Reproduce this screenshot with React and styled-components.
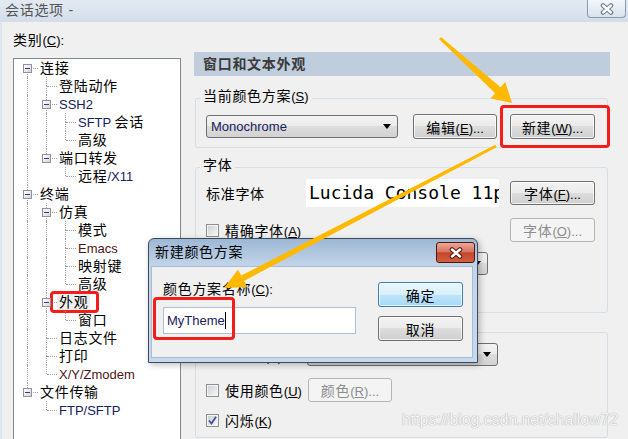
import styled, { createGlobalStyle, css } from "styled-components";

const ORANGE = "#ffb900";
const NAVY = "#17215c";
const MAROON = "#4d1616";

const GlobalStyle = createGlobalStyle`
  *, *::before, *::after { box-sizing: border-box; }
  html, body { margin: 0; padding: 0; }
  body {
    width: 628px;
    height: 439px;
    overflow: hidden;
    background: #f0f0f0;
    font-family: "Liberation Sans", "Noto Sans CJK SC", sans-serif;
    font-size: 14px;
    color: #000;
  }
`;

const redMark = (t, l, w, h) => css`
  &::after {
    content: "";
    position: absolute;
    top: ${t}px;
    left: ${l}px;
    width: ${w}px;
    height: ${h}px;
    border: 3px solid #f51c1c;
    border-radius: 4px;
    pointer-events: none;
  }
`;

const Window = styled.div`
  position: relative;
  width: 628px;
  height: 439px;
  overflow: hidden;
  display: flex;
  flex-direction: column;
  background: #f0f0f0;
  letter-spacing: 0.7px;
`;

const TitleBar = styled.div`
  height: 22px;
  flex: none;
  display: flex;
  align-items: flex-start;
  justify-content: space-between;
  padding-left: 5px;
  background: linear-gradient(#e3eaf3, #d3deeb);
`;

const Title = styled.span`
  line-height: 21px;
  color: #555;
`;

const CaptionButton = styled.div`
  width: 39px;
  height: ${(p) => p.$h}px;
  flex: none;
  display: flex;
  align-items: center;
  justify-content: center;
  ${(p) =>
    p.$danger
      ? css`
          border: 1px solid #4a1a12;
          border-radius: 3px;
          background: linear-gradient(#eaa999 0%, #d87560 45%, #c4452b 52%, #d0603f 100%);
        `
      : css`
          margin-right: 2px;
          border: 1px solid #8a9ab0;
          border-top: none;
          border-radius: 0 0 4px 4px;
          background: linear-gradient(#f4f7fb, #d9e2ed);
        `}
`;

const Body = styled.div`
  flex: 1;
  min-height: 0;
  display: flex;
  border-left: 2px solid #dde6ef;
`;

const Side = styled.div`
  width: 192px;
  flex: none;
  padding: 9px 0 0 11px;
  display: flex;
  flex-direction: column;
`;

const SideLabel = styled.div`
  line-height: 18px;
`;

const TreeBox = styled.div`
  margin-top: 8px;
  width: 168px;
  height: 400px;
  flex: none;
  padding-left: 4px;
  background: #fff;
  border: 1px solid #828790;
`;

const Row = styled.div`
  display: flex;
  height: 18px;
  align-items: center;
`;

const Cell = styled.span`
  position: relative;
  width: 19px;
  height: 18px;
  flex: none;
`;

const VLine = styled.span`
  position: absolute;
  left: 9px;
  top: ${(p) => p.$top}px;
  height: ${(p) => p.$h}px;
  border-left: 1px dotted #a0a0a0;
`;

const HLine = styled.span`
  position: absolute;
  left: 10px;
  top: 9px;
  width: 10px;
  border-top: 1px dotted #a0a0a0;
`;

const Expander = styled.span`
  position: absolute;
  left: 5px;
  top: 5px;
  width: 9px;
  height: 9px;
  z-index: 1;
  border: 1px solid #929292;
  background: linear-gradient(135deg, #ffffff, #d6d6d6);

  &::after {
    content: "";
    position: absolute;
    left: 1px;
    top: 3px;
    width: 5px;
    height: 1px;
    background: #23418f;
  }
`;

const NodeText = styled.span`
  position: relative;
  margin-left: 1px;
  padding: 0 2px;
  line-height: 18px;
  white-space: nowrap;
  ${(p) => p.$marked && css`background: #eeeeee;`}
  ${(p) => p.$marked && redMark(-2, -7, 49, 22)}
`;

const Latin = styled.span`
  font-size: 13px;
  letter-spacing: 0;
  color: ${(p) => p.$tint || "inherit"};
`;

const Main = styled.div`
  width: 416px;
  flex: none;
  padding-top: 30px;
  display: flex;
  flex-direction: column;
`;

const SectionHeader = styled.div`
  height: 24px;
  line-height: 24px;
  padding-left: 9px;
  background: #bfcddc;
  color: #3a3a3a;
  font-weight: bold;
`;

const Group = styled.fieldset`
  min-width: 0;
  margin: ${(p) => p.$top}px 2px 0 1px;
  padding: ${(p) => p.$pt}px 12px ${(p) => p.$pb}px 10px;
  border: 1px solid #d5dfe5;
  border-radius: 3px;
`;

const Legend = styled.legend`
  margin-left: -6px;
  padding: 0 3px 4px;
  line-height: 18px;
`;

const Line = styled.div`
  display: flex;
  align-items: center;
  height: ${(p) => p.$h}px;
  margin-top: ${(p) => p.$gap || 0}px;
`;

const Caption = styled.span`
  width: ${(p) => p.$w}px;
  flex: none;
  white-space: nowrap;
`;

const Button = styled.button`
  position: relative;
  width: ${(p) => p.$w || 85}px;
  height: ${(p) => p.$h || 25}px;
  flex: none;
  margin: 0 ${(p) => p.$mr || 0}px 0 ${(p) => (p.$push ? "auto" : "0")};
  padding: 0;
  font: inherit;
  letter-spacing: 0.7px;
  color: #000;
  border: 1px solid #707070;
  border-radius: 3px;
  background: linear-gradient(#f3f3f3 0%, #ebebeb 50%, #dddddd 50%, #cfcfcf 100%);
  box-shadow: inset 0 0 0 1px rgba(255, 255, 255, 0.7);

  &:disabled {
    color: #8d8d8d;
    border-color: #b3b6b9;
    background: #f4f4f4;
    box-shadow: none;
  }

  ${(p) =>
    p.$default &&
    css`
      border-color: #3c7fb1;
      background: linear-gradient(#eaf6fd 0%, #d9f0fc 50%, #bee6fd 50%, #a7d9f5 100%);
    `}
  ${(p) => p.$marked && redMark(-10, -11, 110, 43)}
`;

const Combo = styled.div`
  width: ${(p) => p.$w}px;
  height: 23px;
  flex: none;
  margin-right: ${(p) => p.$mr || 0}px;
  padding: 0 6px 0 4px;
  display: flex;
  align-items: center;
  justify-content: space-between;
  border: 1px solid #707070;
  border-radius: 3px;
  background: linear-gradient(#f3f3f3 0%, #ebebeb 50%, #dddddd 50%, #d2d2d2 100%);

  &::after {
    content: "";
    border-left: 4.5px solid transparent;
    border-right: 4.5px solid transparent;
    border-top: 5px solid #000;
  }
`;

const FontPreview = styled.div`
  width: 193px;
  height: 28px;
  flex: none;
  margin-right: 11px;
  padding-left: 3px;
  overflow: hidden;
  white-space: nowrap;
  background: #fff;
  font-family: "DejaVu Sans Mono", "Liberation Mono", monospace;
  font-size: 18px;
  line-height: 28px;
  letter-spacing: 0;
`;

const CheckLabel = styled.label`
  display: flex;
  align-items: center;
  gap: 6px;
  width: ${(p) => (p.$w ? `${p.$w}px` : "auto")};
  flex: none;
  white-space: nowrap;
`;

const CheckBox = styled.span`
  width: 13px;
  height: 13px;
  flex: none;
  padding: 1px;
  display: flex;
  border: 1px solid #8e8f8f;
  background: #f4f4f4;
`;

const CheckFace = styled.span`
  flex: 1;
  display: flex;
  align-items: center;
  justify-content: center;
  background: linear-gradient(135deg, #cdd0d4, #f6f6f6);
`;

const Dialog = styled.div`
  position: absolute;
  left: 148px;
  top: 238px;
  width: 330px;
  height: 125px;
  padding: 0 4px 4px 2px;
  display: flex;
  flex-direction: column;
  border: 1px solid #3e4a59;
  border-radius: 6px 6px 0 0;
  background: linear-gradient(#9db7d4 0px, #c2d5ea 27px, #c6d9ee 100%);
  box-shadow: 2px 2px 6px rgba(0, 0, 0, 0.25);
`;

const DialogTitle = styled.div`
  height: 27px;
  flex: none;
  display: flex;
  align-items: flex-start;
  justify-content: space-between;
  padding: 3px 0 0 4px;
  margin-right: -2px;
  line-height: 21px;
`;

const DialogBody = styled.div`
  flex: 1;
  display: flex;
  padding: 11px 9px 0 11px;
  background: #f0f0f0;
  border: 1px solid #a6bdd6;
`;

const FieldColumn = styled.div`
  display: flex;
  flex-direction: column;
`;

const ButtonColumn = styled.div`
  margin-left: auto;
  padding-top: 4px;
  display: flex;
  flex-direction: column;
  gap: 9px;
`;

const TextField = styled.div`
  position: relative;
  width: 193px;
  height: 27px;
  margin-top: 9px;
  padding-left: 3px;
  display: flex;
  align-items: center;
  background: #fff;
  border: 1px solid #abc0d5;
  font-size: 13px;
  letter-spacing: 0;
  color: ${NAVY};
  ${redMark(-11, -11, 82, 43)}
`;

const Caret = styled.span`
  width: 1px;
  height: 17px;
  background: #000;
`;

const Overlay = styled.svg`
  position: absolute;
  left: 0;
  top: 0;
  pointer-events: none;
`;

const Watermark = styled.div`
  position: absolute;
  left: 402px;
  top: 411px;
  font-size: 15.8px;
  line-height: 18px;
  letter-spacing: 0;
  color: rgba(255, 255, 255, 0.9);
  text-shadow: 0 0 1px #a9a9a9, 0 0 1px #bdbdbd;
  pointer-events: none;
`;

function mnemonic(text) {
  const i = text.indexOf("&");
  if (i < 0) return text;
  return (
    <>
      {text.slice(0, i)}
      <u>{text[i + 1]}</u>
      {text.slice(i + 2)}
    </>
  );
}

// Latin runs are set a size smaller than CJK, like Tahoma next to YaHei
function T({ s, tint }) {
  return s
    .split(/([\x20-\x7e]+)/)
    .filter(Boolean)
    .map((part, i) =>
      /[\x20-\x7e]/.test(part[0]) ? (
        <Latin key={i} $tint={tint}>
          {mnemonic(part)}
        </Latin>
      ) : (
        <span key={i}>{part}</span>
      )
    );
}

function CloseGlyph({ edge }) {
  const d = "M3 2.5 L11 9.5 M11 2.5 L3 9.5";
  return (
    <svg width="14" height="12" viewBox="0 0 14 12">
      <path d={d} stroke={edge} strokeWidth="4.6" strokeLinecap="round" fill="none" />
      <path d={d} stroke="#fff" strokeWidth="2.4" strokeLinecap="round" fill="none" />
    </svg>
  );
}

function Check({ checked, label, w }) {
  return (
    <CheckLabel $w={w}>
      <CheckBox>
        <CheckFace>
          {checked && (
            <svg width="9" height="9" viewBox="0 0 9 9">
              <path d="M1 4.5 L3.5 7.5 L8 0.8" stroke="#3f5595" strokeWidth="1.8" fill="none" />
            </svg>
          )}
        </CheckFace>
      </CheckBox>
      <span>
        <T s={label} />
      </span>
    </CheckLabel>
  );
}

const TREE = [
  [0, "连接", true],
  [1, "登陆动作"],
  [1, "SSH2", true, NAVY],
  [2, "SFTP 会话", false, NAVY],
  [2, "高级"],
  [1, "端口转发", true],
  [2, "远程/X11", false, NAVY],
  [0, "终端", true],
  [1, "仿真", true],
  [2, "模式"],
  [2, "Emacs", false, MAROON],
  [2, "映射键"],
  [2, "高级"],
  [1, "外观", true, null, true],
  [2, "窗口"],
  [1, "日志文件"],
  [1, "打印"],
  [1, "X/Y/Zmodem", false, MAROON],
  [0, "文件传输", true],
  [1, "FTP/SFTP", false, NAVY],
].map(([level, label, open, tint, marked]) => ({ level, label, open, tint, marked }));

const hasNext = TREE.map((n, i) => {
  for (let j = i + 1; j < TREE.length; j++) {
    if (TREE[j].level < n.level) return false;
    if (TREE[j].level === n.level) return true;
  }
  return false;
});

const treeRows = TREE.map((n, i) => {
  const through = [];
  for (let k = 0; k < n.level; k++) {
    let j = i - 1;
    while (TREE[j].level > k) j--;
    through.push(hasNext[j]);
  }
  return { ...n, through, next: hasNext[i], first: i === 0 };
});

function arrow([sx, sy], [tx, ty], sw, ew, h, hw) {
  const len = Math.hypot(tx - sx, ty - sy);
  const ux = (tx - sx) / len;
  const uy = (ty - sy) / len;
  const nx = -uy;
  const ny = ux;
  const bx = tx - ux * h;
  const by = ty - uy * h;
  return [
    [sx + (nx * sw) / 2, sy + (ny * sw) / 2],
    [bx + (nx * ew) / 2, by + (ny * ew) / 2],
    [bx + nx * hw, by + ny * hw],
    [tx, ty],
    [bx - nx * hw, by - ny * hw],
    [bx - (nx * ew) / 2, by - (ny * ew) / 2],
    [sx - (nx * sw) / 2, sy - (ny * sw) / 2],
  ]
    .map((p) => p.map((v) => v.toFixed(1)).join(","))
    .join(" ");
}

const ARROWS = [
  arrow([440, 38], [512, 103], 3, 8, 19, 11),
  arrow([496, 146], [224, 288], 3, 6, 21, 10),
];

function Tree() {
  return (
    <TreeBox>
      {treeRows.map((r, i) => (
        <Row key={i}>
          {r.through.map((on, k) => (
            <Cell key={k}>{on && <VLine $top={0} $h={18} />}</Cell>
          ))}
          <Cell>
            {!r.first && <VLine $top={0} $h={9} />}
            {r.next && <VLine $top={9} $h={9} />}
            <HLine />
            {r.open && <Expander />}
          </Cell>
          <NodeText $marked={r.marked}>
            <T s={r.label} tint={r.tint} />
          </NodeText>
        </Row>
      ))}
    </TreeBox>
  );
}

export default function App() {
  return (
    <>
      <GlobalStyle />
      <Window>
        <TitleBar>
          <Title>会话选项 -</Title>
          <CaptionButton $h={18}>
            <CloseGlyph edge="#6f7c8e" />
          </CaptionButton>
        </TitleBar>

        <Body>
          <Side>
            <SideLabel>
              <T s="类别(&C):" />
            </SideLabel>
            <Tree />
          </Side>

          <Main>
            <SectionHeader>窗口和文本外观</SectionHeader>

            <Group $top={11} $pt={4} $pb={8}>
              <Legend>
                <T s="当前颜色方案(&S)" />
              </Legend>
              <Line $h={25}>
                <Combo $w={192} $mr={15}>
                  <Latin $tint={NAVY}>Monochrome</Latin>
                </Combo>
                <Button $w={84} $mr={13}>
                  <T s="编辑(&E)..." />
                </Button>
                <Button $marked>
                  <T s="新建(&W)..." />
                </Button>
              </Line>
            </Group>

            <Group $top={8} $pt={1} $pb={13}>
              <Legend>字体</Legend>
              <Line $h={28}>
                <Caption $w={100}>标准字体</Caption>
                <FontPreview>Lucida Console 11pt</FontPreview>
                <Button $h={24}>
                  <T s="字体(&F)..." />
                </Button>
              </Line>
              <Line $h={24} $gap={11}>
                <Check label="精确字体(&A)" />
                <Button $h={24} $push disabled>
                  <T s="字体(&O)..." />
                </Button>
              </Line>
              <Line $h={23} $gap={10}>
                <Caption $w={100}>
                  <T s="字符编码(&N):" />
                </Caption>
                <Combo $w={182}>
                  <Latin>Default</Latin>
                </Combo>
              </Line>
              <Line $h={14} $gap={10}>
                <Check label="使用 Unicode 图形字符(&G)" />
              </Line>
            </Group>

            <Group $top={8} $pt={0} $pb={10}>
              <Legend>光标</Legend>
              <Line $h={23}>
                <Caption $w={101}>
                  <T s="光标样式(&Y):" />
                </Caption>
                <Combo $w={191}>
                  <span>块</span>
                </Combo>
              </Line>
              <Line $h={24} $gap={12}>
                <Check label="使用颜色(&U)" w={102} />
                <Button $w={84} $h={24} disabled>
                  <T s="颜色(&R)..." />
                </Button>
              </Line>
              <Line $h={14} $gap={11}>
                <Check label="闪烁(&K)" checked />
              </Line>
            </Group>
          </Main>
        </Body>

        <Dialog>
          <DialogTitle>
            <span>新建颜色方案</span>
            <CaptionButton $h={21} $danger>
              <CloseGlyph edge="#5a2014" />
            </CaptionButton>
          </DialogTitle>
          <DialogBody>
            <FieldColumn>
              <div>
                <T s="颜色方案名称(&C):" />
              </div>
              <TextField>
                MyTheme
                <Caret />
              </TextField>
            </FieldColumn>
            <ButtonColumn>
              <Button $default>确定</Button>
              <Button>取消</Button>
            </ButtonColumn>
          </DialogBody>
        </Dialog>

        <Watermark>https://blog.csdn.net/shallow72</Watermark>

        <Overlay width="628" height="439" viewBox="0 0 628 439">
          {ARROWS.map((pts, i) => (
            <polygon key={i} points={pts} fill={ORANGE} />
          ))}
        </Overlay>
      </Window>
    </>
  );
}
